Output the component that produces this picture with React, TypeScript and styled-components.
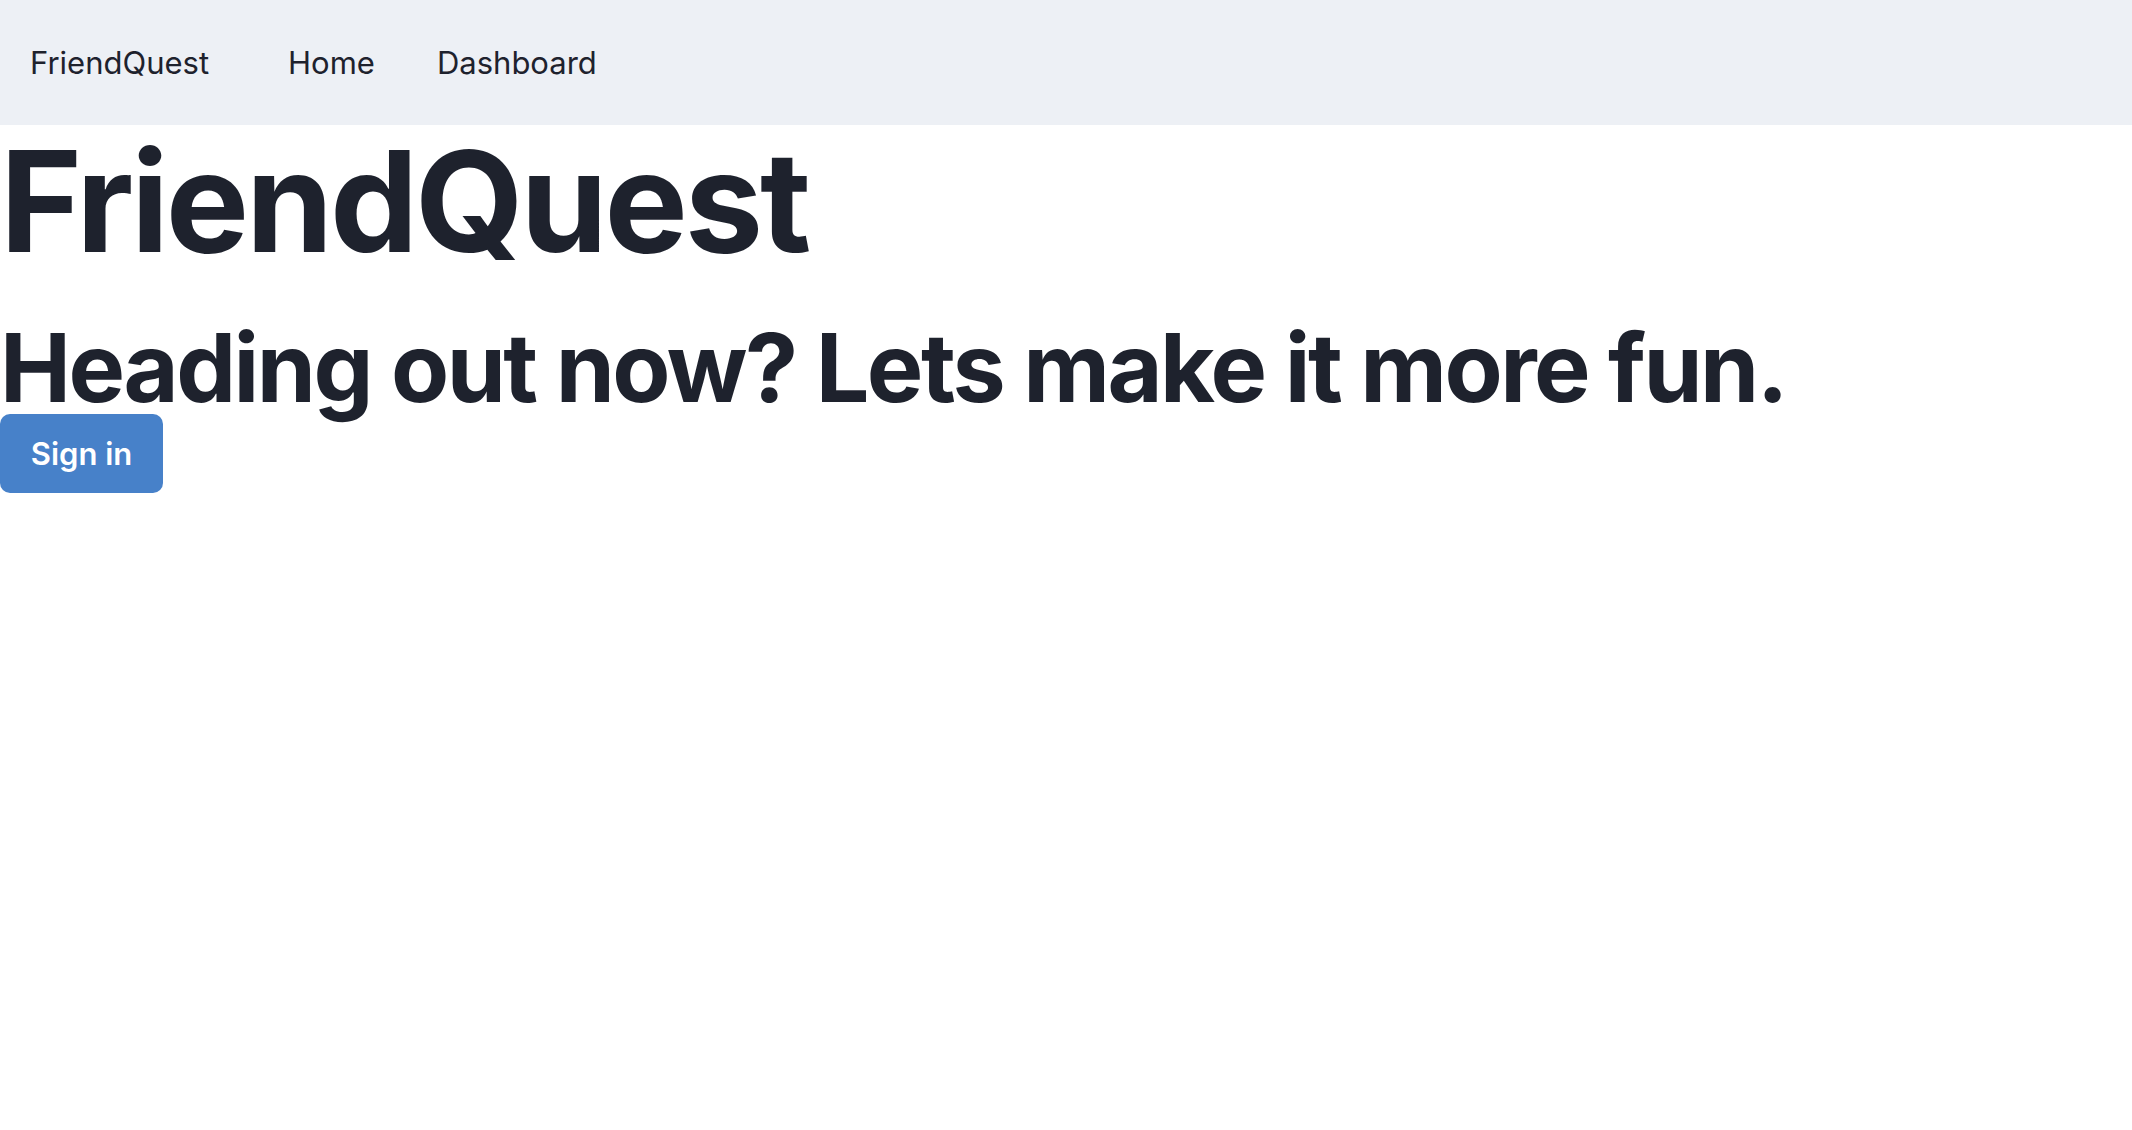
import * as React from 'react';
import styled, {createGlobalStyle} from 'styled-components';

const GlobalStyle = createGlobalStyle`
  html, body {
    margin: 0;
    padding: 0;
    background: #ffffff;
  }
  body {
    font-family: 'Inter', 'Noto Sans', sans-serif;
    color: #1e222d;
  }
`;

const links = ['Home', 'Dashboard'];

const App = () => {
  return (
    <>
      <GlobalStyle />
      <NavBar>
        <Brand href='#'>FriendQuest</Brand>
        <NavList>
          {links.map((link) => (
            <NavItem key={link}>
              <NavLink href='#'>{link}</NavLink>
            </NavItem>
          ))}
        </NavList>
      </NavBar>
      <Main>
        <Title>FriendQuest</Title>
        <Subtitle>Heading out now? Lets make it more fun.</Subtitle>
        <SignInButton type='button'>Sign in</SignInButton>
      </Main>
    </>
  );
};

const NavBar = styled.nav`
  display: flex;
  align-items: center;
  height: 125px;
  padding-left: 30px;
  background-color: #edf0f5;
`;

const Brand = styled.a`
  margin-right: 48px;
  font-size: 31px;
  font-weight: 400;
  color: #1e222d;
  text-decoration: none;
`;

const NavList = styled.ul`
  display: flex;
  margin: 0;
  padding: 0;
  list-style: none;
`;

const NavItem = styled.li`
  display: block;
`;

const NavLink = styled.a`
  display: block;
  padding: 0 31px;
  font-size: 31px;
  color: #1e222d;
  text-decoration: none;
`;

const Main = styled.main`
  display: flex;
  flex-direction: column;
  align-items: flex-start;
`;

const Title = styled.h1`
  margin: 6px 0 0;
  font-size: 140px;
  font-weight: 700;
  line-height: 1;
  letter-spacing: -3.2px;
`;

const Subtitle = styled.h2`
  margin: 51px 0 0;
  font-size: 95px;
  font-weight: 700;
  line-height: 0.97;
  letter-spacing: -2.5px;
`;

const SignInButton = styled.button`
  display: flex;
  align-items: center;
  justify-content: center;
  width: 163px;
  height: 79px;
  border: 0;
  border-radius: 10px;
  background-color: #4781c9;
  color: #ffffff;
  font-family: 'Inter', 'Noto Sans', sans-serif;
  font-size: 31px;
  font-weight: 600;
  cursor: pointer;
`;

export default App;
